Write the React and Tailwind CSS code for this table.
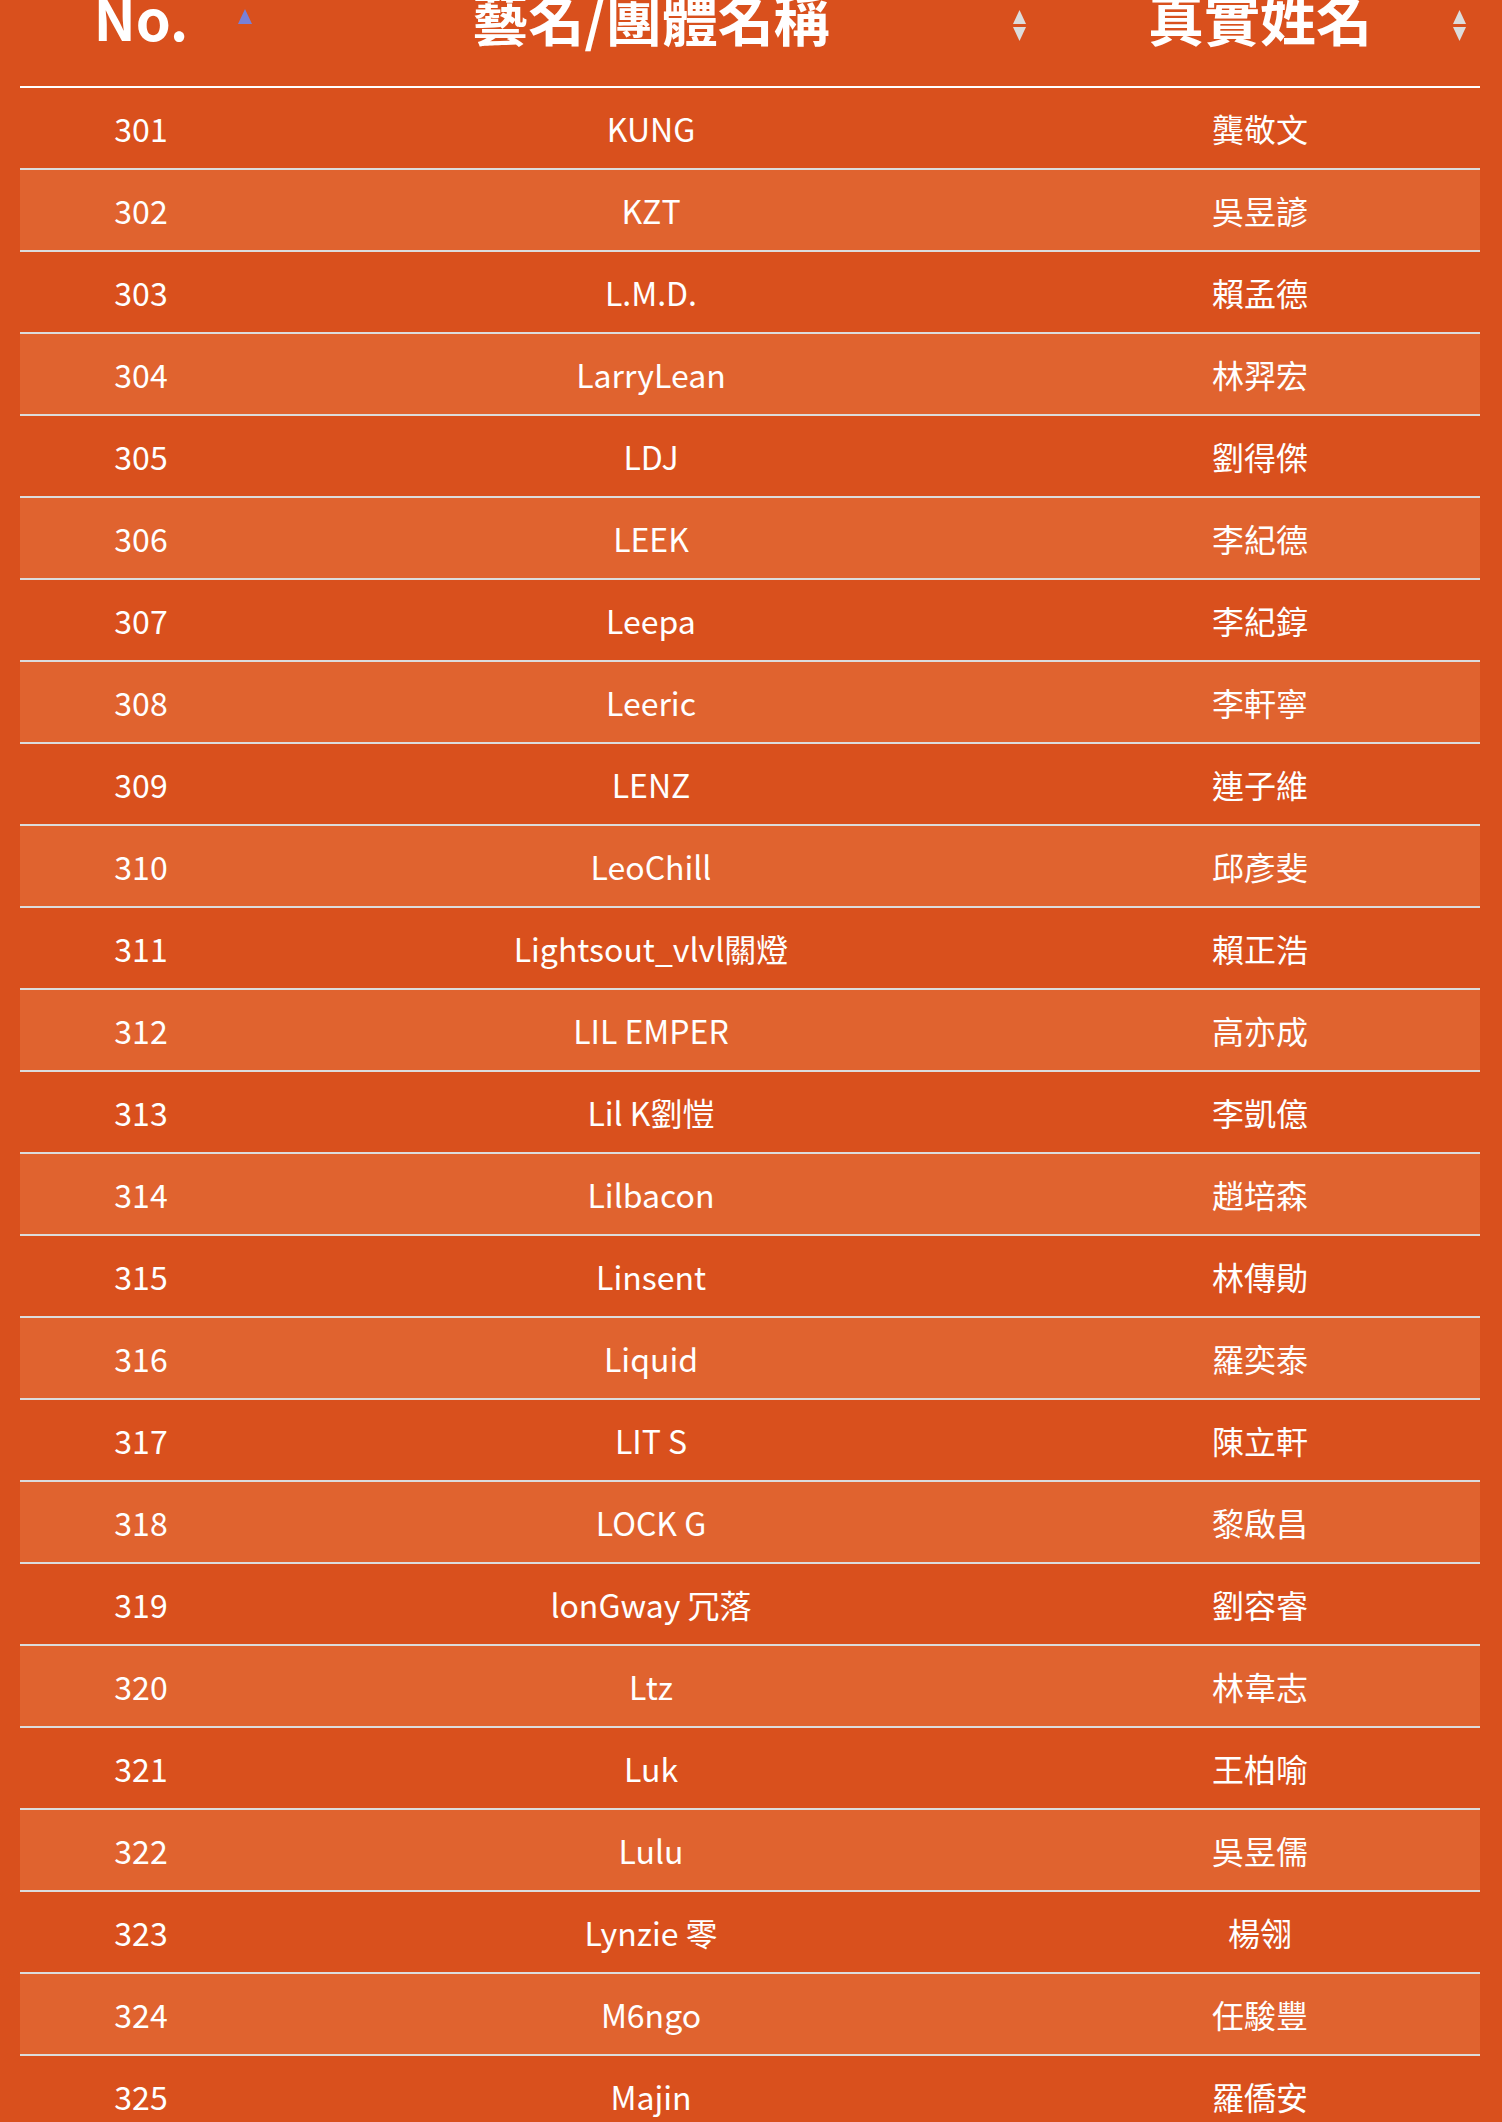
import React from "react";

const rows = [
  [301, "KUNG", "龔敬文"],
  [302, "KZT", "吳昱諺"],
  [303, "L.M.D.", "賴孟德"],
  [304, "LarryLean", "林羿宏"],
  [305, "LDJ", "劉得傑"],
  [306, "LEEK", "李紀德"],
  [307, "Leepa", "李紀錞"],
  [308, "Leeric", "李軒寧"],
  [309, "LENZ", "連子維"],
  [310, "LeoChill", "邱彥斐"],
  [311, "Lightsout_vlvl關燈", "賴正浩"],
  [312, "LIL EMPER", "高亦成"],
  [313, "Lil K劉愷", "李凱億"],
  [314, "Lilbacon", "趙培森"],
  [315, "Linsent", "林傳勛"],
  [316, "Liquid", "羅奕泰"],
  [317, "LIT S", "陳立軒"],
  [318, "LOCK G", "黎啟昌"],
  [319, "lonGway 冗落", "劉容睿"],
  [320, "Ltz", "林韋志"],
  [321, "Luk", "王柏喻"],
  [322, "Lulu", "吳昱儒"],
  [323, "Lynzie 零", "楊翎"],
  [324, "M6ngo", "任駿豐"],
  [325, "Majin", "羅僑安"],
];

function SortBoth() {
  return (
    <svg width="13" height="31" viewBox="0 0 13 31" className="blur-[0.6px]">
      <polygon points="6.5,0 13,14 0,14" fill="#dcdcdc" />
      <polygon points="0,17 13,17 6.5,31" fill="#dcdcdc" />
    </svg>
  );
}

function SortAsc() {
  return (
    <svg width="14" height="15" viewBox="0 0 14 15" className="blur-[0.6px]">
      <polygon points="7,0 14,15 0,15" fill="#7880d8" />
    </svg>
  );
}

export default function App() {
  return (
    <div
      className="min-h-screen overflow-hidden bg-[#d9501d] text-white"
      style={{ fontFamily: '"Noto Sans CJK TC", "Noto Sans", sans-serif' }}
    >
      <div className="-mt-[11px] px-[20px]">
        <table className="w-[1460px] table-fixed border-collapse">
          <colgroup>
            <col className="w-[242px]" />
            <col className="w-[778px]" />
            <col className="w-[440px]" />
          </colgroup>
          <thead>
            <tr className="border-b-2 border-white">
              <th className="relative pb-[41px] text-center text-[56px] font-bold leading-none">
                No.
                <span className="absolute right-[10px] top-[20px]">
                  <SortAsc />
                </span>
              </th>
              <th className="relative pb-[41px] text-center text-[56px] font-bold leading-none">
                藝名/團體名稱
                <span className="absolute right-[14px] top-[21px]">
                  <SortBoth />
                </span>
              </th>
              <th className="relative pb-[41px] text-center text-[56px] font-bold leading-none">
                真實姓名
                <span className="absolute right-[14px] top-[21px]">
                  <SortBoth />
                </span>
              </th>
            </tr>
          </thead>
          <tbody>
            {rows.map(([no, stage, real], i) => (
              <tr
                key={no}
                className={
                  "h-[82px] border-b-2 border-[#dcdcdc] " +
                  (i % 2 === 1 ? "bg-[#e0632f]" : "bg-[#d9501d]")
                }
              >
                <td className="text-center text-[32px] leading-none">{no}</td>
                <td className="text-center text-[32px] leading-none">{stage}</td>
                <td className="text-center text-[32px] leading-none">{real}</td>
              </tr>
            ))}
          </tbody>
        </table>
      </div>
    </div>
  );
}
